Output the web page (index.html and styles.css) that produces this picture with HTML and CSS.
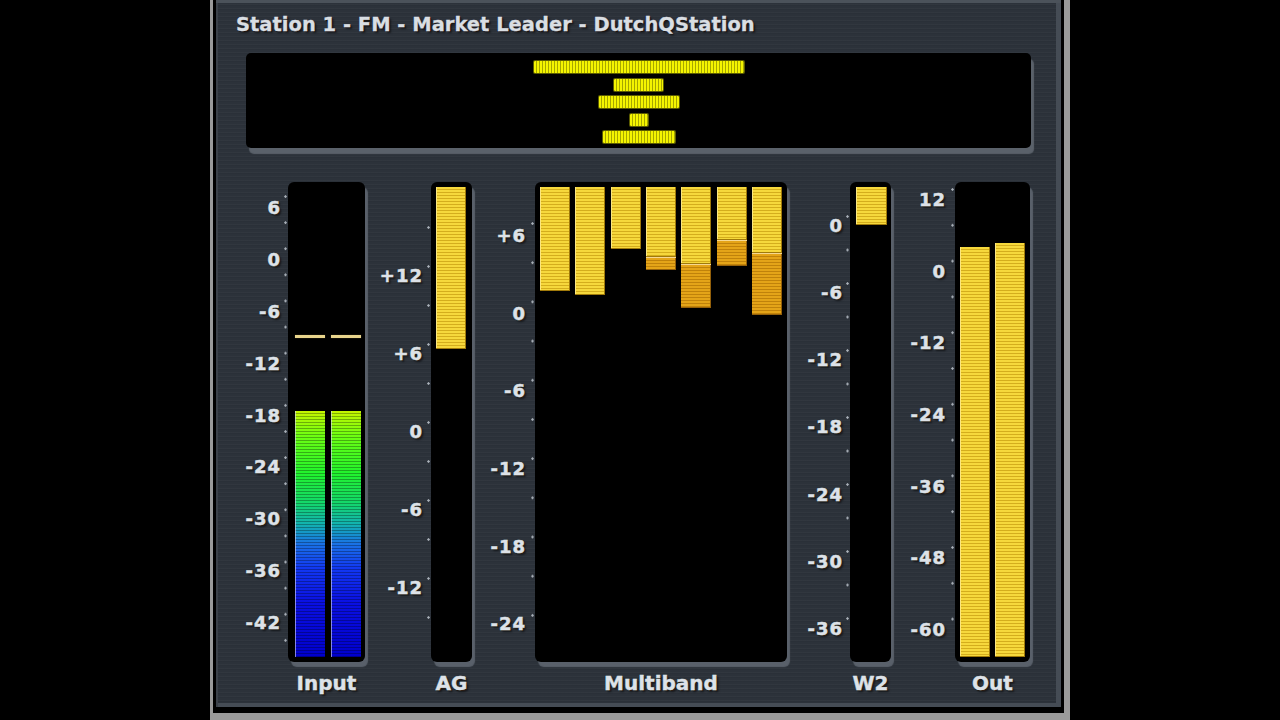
FILE: index.html
```html
<!DOCTYPE html>
<html lang="en">
<head>
  <meta charset="UTF-8" />
  <meta name="viewport" content="width=device-width, initial-scale=1" />
  <title>Station 1 - Meters</title>
  <link rel="stylesheet" href="styles.css">
</head>
<body>
  <div class="frame">
    <div class="panel">
      <h1 class="title">Station 1 - FM - Market Leader - DutchQStation</h1>

      <!-- gain reduction readout -->
      <div class="display">
        <span class="seg" style="width:210px"></span>
        <span class="seg" style="width:49px"></span>
        <span class="seg" style="width:80px"></span>
        <span class="seg" style="width:18px"></span>
        <span class="seg" style="width:72px"></span>
      </div>

      <div class="meters">
        <div class="meter meter-input">
          <div class="scale">
            <span>6</span><span>0</span><span>-6</span><span>-12</span><span>-18</span>
            <span>-24</span><span>-30</span><span>-36</span><span>-42</span>
          </div>
          <div class="ticks"></div>
          <div class="well">
            <div class="channel">
              <i class="peak" style="margin-top:148px"></i>
              <i class="bar bar-input" style="height:246px"></i>
            </div>
            <div class="channel">
              <i class="peak" style="margin-top:148px"></i>
              <i class="bar bar-input" style="height:246px"></i>
            </div>
          </div>
          <div class="caption">Input</div>
        </div>

        <div class="meter meter-ag">
          <div class="scale">
            <span>+12</span><span>+6</span><span>0</span><span>-6</span><span>-12</span>
          </div>
          <div class="ticks"></div>
          <div class="well">
            <div class="channel">
              <i class="bar bar-gold" style="height:162px"></i>
            </div>
          </div>
          <div class="caption">AG</div>
        </div>

        <div class="meter meter-mb">
          <div class="scale">
            <span>+6</span><span>0</span><span>-6</span><span>-12</span><span>-18</span><span>-24</span>
          </div>
          <div class="ticks"></div>
          <div class="well">
            <div class="band"><i class="bar bar-gold" style="height:104px"></i></div>
            <div class="band"><i class="bar bar-gold" style="height:108px"></i></div>
            <div class="band"><i class="bar bar-gold" style="height:62px"></i></div>
            <div class="band"><i class="bar bar-gold" style="height:70px"></i><i class="bar bar-amber" style="height:12px"></i></div>
            <div class="band"><i class="bar bar-gold" style="height:77px"></i><i class="bar bar-amber" style="height:43px"></i></div>
            <div class="band"><i class="bar bar-gold" style="height:53px"></i><i class="bar bar-amber" style="height:25px"></i></div>
            <div class="band"><i class="bar bar-gold" style="height:66px"></i><i class="bar bar-amber" style="height:61px"></i></div>
          </div>
          <div class="caption">Multiband</div>
        </div>

        <div class="meter meter-w2">
          <div class="scale">
            <span>0</span><span>-6</span><span>-12</span><span>-18</span><span>-24</span><span>-30</span><span>-36</span>
          </div>
          <div class="ticks"></div>
          <div class="well">
            <div class="channel">
              <i class="bar bar-gold" style="height:38px"></i>
            </div>
          </div>
          <div class="caption">W2</div>
        </div>

        <div class="meter meter-out">
          <div class="scale">
            <span>12</span><span>0</span><span>-12</span><span>-24</span><span>-36</span><span>-48</span><span>-60</span>
          </div>
          <div class="ticks"></div>
          <div class="well">
            <div class="channel">
              <i class="bar bar-gold" style="height:410px"></i>
            </div>
            <div class="channel">
              <i class="bar bar-gold" style="height:414px"></i>
            </div>
          </div>
          <div class="caption">Out</div>
        </div>
      </div>
    </div>
  </div>
</body>
</html>
```

FILE: styles.css
```css
html, body {
  margin: 0;
  height: 720px;
  overflow: hidden;
  background: #000;
}
body {
  font-family: "DejaVu Sans", Verdana, sans-serif;
  font-weight: bold;
  color: #dde2e8;
}

/* outer window frame */
.frame {
  box-sizing: border-box;
  width: 860px;
  height: 720px;
  margin-left: 210px;
  padding: 0 3px 6px 3px;
  border: 0 solid #9a9a9a;
  border-width: 0 6px 7px 3px;
  background: #000;
}
.panel {
  box-sizing: border-box;
  height: 707px;
  padding-top: 13px;
  background:
    repeating-linear-gradient(to bottom, rgba(255,255,255,0.025) 0 1px, rgba(0,0,0,0.04) 1px 2px, transparent 2px 4px),
    #2c323a;
  box-shadow:
    inset 0 3px 0 #4b525a,
    inset 2px 0 0 #3b4149,
    inset -5px -4px 0 #454c55;
}

.title {
  margin: 0 0 16px;
  padding-left: 20px;
  font-size: 19.5px;
  line-height: 24px;
  font-weight: bold;
  color: #d9dee3;
  -webkit-text-stroke: 0.3px #d9dee3;
  text-shadow: 1px 1px 0 #1c140e, 2px 2px 2px rgba(0,0,0,0.5);
  white-space: nowrap;
}

/* top readout */
.display {
  box-sizing: border-box;
  height: 95px;
  margin: 0 30px;
  padding-top: 8px;
  display: flex;
  flex-direction: column;
  align-items: center;
  gap: 5.5px;
  background: #000;
  border-radius: 5px;
  box-shadow: 3px 6px 1px #5a616a;
}
.seg {
  display: block;
  height: 12px;
  border-radius: 1px;
  background: repeating-linear-gradient(to right, #f4f400 0 2px, #a6a600 2px 3px);
  box-shadow: 0 0 0 1px #5c5c00;
}

/* meter row */
.meters {
  display: flex;
  margin-top: 34px;
  padding-left: 14px;
}
.meter {
  display: grid;
  grid-template-columns: var(--scale-w) 5px var(--well-w);
  grid-template-rows: 480px auto;
  align-items: start;
  margin-left: var(--gap);
}
.scale {
  display: flex;
  flex-direction: column;
  margin-top: var(--scale-top);
  padding-right: var(--scale-pad);
  font-size: 18px;
  letter-spacing: 1px;
  text-align: right;
  -webkit-text-stroke: 0.5px #dde2e8;
  text-shadow: 1px 1px 0 #2a1c12, 2px 2px 2px rgba(0,0,0,0.55);
}
.scale span {
  height: var(--row);
  line-height: var(--row);
}
.ticks {
  margin-top: var(--tick-top);
  height: var(--tick-h);
  background: radial-gradient(circle at 2.5px 1.5px, #aab1b9 0.9px, transparent 1.5px) 0 0 / 5px var(--step) repeat-y;
}
.well {
  box-sizing: border-box;
  height: 480px;
  display: flex;
  background: #000;
  border-radius: 6px;
  box-shadow: 3px 5px 1px #59606a;
}
.caption {
  grid-column: 3;
  margin-top: 9px;
  font-size: 20px;
  line-height: 24px;
  text-align: center;
  -webkit-text-stroke: 0.4px #dde2e8;
  text-shadow: 1px 1px 0 #2a1c12, 2px 2px 2px rgba(0,0,0,0.55);
}

.channel, .band {
  display: flex;
  flex-direction: column;
  width: 30px;
}
.bar {
  display: block;
  flex: none;
}
.bar-input {
  margin-top: auto;
  background:
    repeating-linear-gradient(to bottom, transparent 0 2px, rgba(0,0,0,0.3) 2px 3px),
    linear-gradient(to bottom, #c6f500 0%, #6eff12 10%, #22f42c 25%, #14d868 37%, #12b2b0 46%, #1a72e6 54%, #1238f2 64%, #0a10e2 78%, #0000cc 100%);
  box-shadow: inset 1px 0 0 rgba(220,220,255,0.6);
}
.bar-gold {
  background: repeating-linear-gradient(to bottom, #f6d83c 0 2px, #d4ad1c 2px 3px);
  box-shadow: inset -1px -1px 0 #a07a0a, inset 1px 0 0 #fbe680;
}
.bar-amber {
  background: repeating-linear-gradient(to bottom, #e4a418 0 2px, #c0820a 2px 3px);
  border-top: 1px solid #f6d890;
  box-shadow: inset -1px -1px 0 #94600a;
}
.peak {
  display: block;
  height: 3px;
  background: #e8d48c;
  box-shadow: 0 0 1px #8a7a40;
}

/* per meter geometry */
.meter-input {
  --gap: 0px; --scale-w: 53px; --well-w: 77px;
  --scale-top: 0px; --scale-pad: 2px; --row: 51.9px;
  --tick-top: 12.5px; --tick-h: 447px; --step: 26.12px;
}
.meter-input .well { padding: 5px 4px 5px 7px; gap: 6px; }

.meter-ag {
  --gap: 9px; --scale-w: 52px; --well-w: 41px;
  --scale-top: 54.5px; --scale-pad: 3px; --row: 78.1px;
  --tick-top: 43.5px; --tick-h: 393px; --step: 39px;
}
.meter-ag .well { padding: 5px 6px 5px 5px; }

.meter-mb {
  --gap: 6px; --scale-w: 52px; --well-w: 252px;
  --scale-top: 15.2px; --scale-pad: 4px; --row: 77.6px;
  --tick-top: 39.5px; --tick-h: 395px; --step: 39.2px;
}
.meter-mb .well { padding: 5px; justify-content: space-between; }

.meter-w2 {
  --gap: 8px; --scale-w: 50px; --well-w: 41px;
  --scale-top: 9.9px; --scale-pad: 2px; --row: 67.2px;
  --tick-top: 33.2px; --tick-h: 405px; --step: 33.5px;
}
.meter-w2 .well { padding: 5px 4px 5px 6px; }
.meter-w2 .channel { width: 31px; }

.meter-out {
  --gap: 9px; --scale-w: 50px; --well-w: 75px;
  --scale-top: -18px; --scale-pad: 4px; --row: 71.7px;
  --tick-top: 5.8px; --tick-h: 433px; --step: 35.8px;
}
.meter-out .well { padding: 5px; gap: 5px; align-items: flex-end; }
```
